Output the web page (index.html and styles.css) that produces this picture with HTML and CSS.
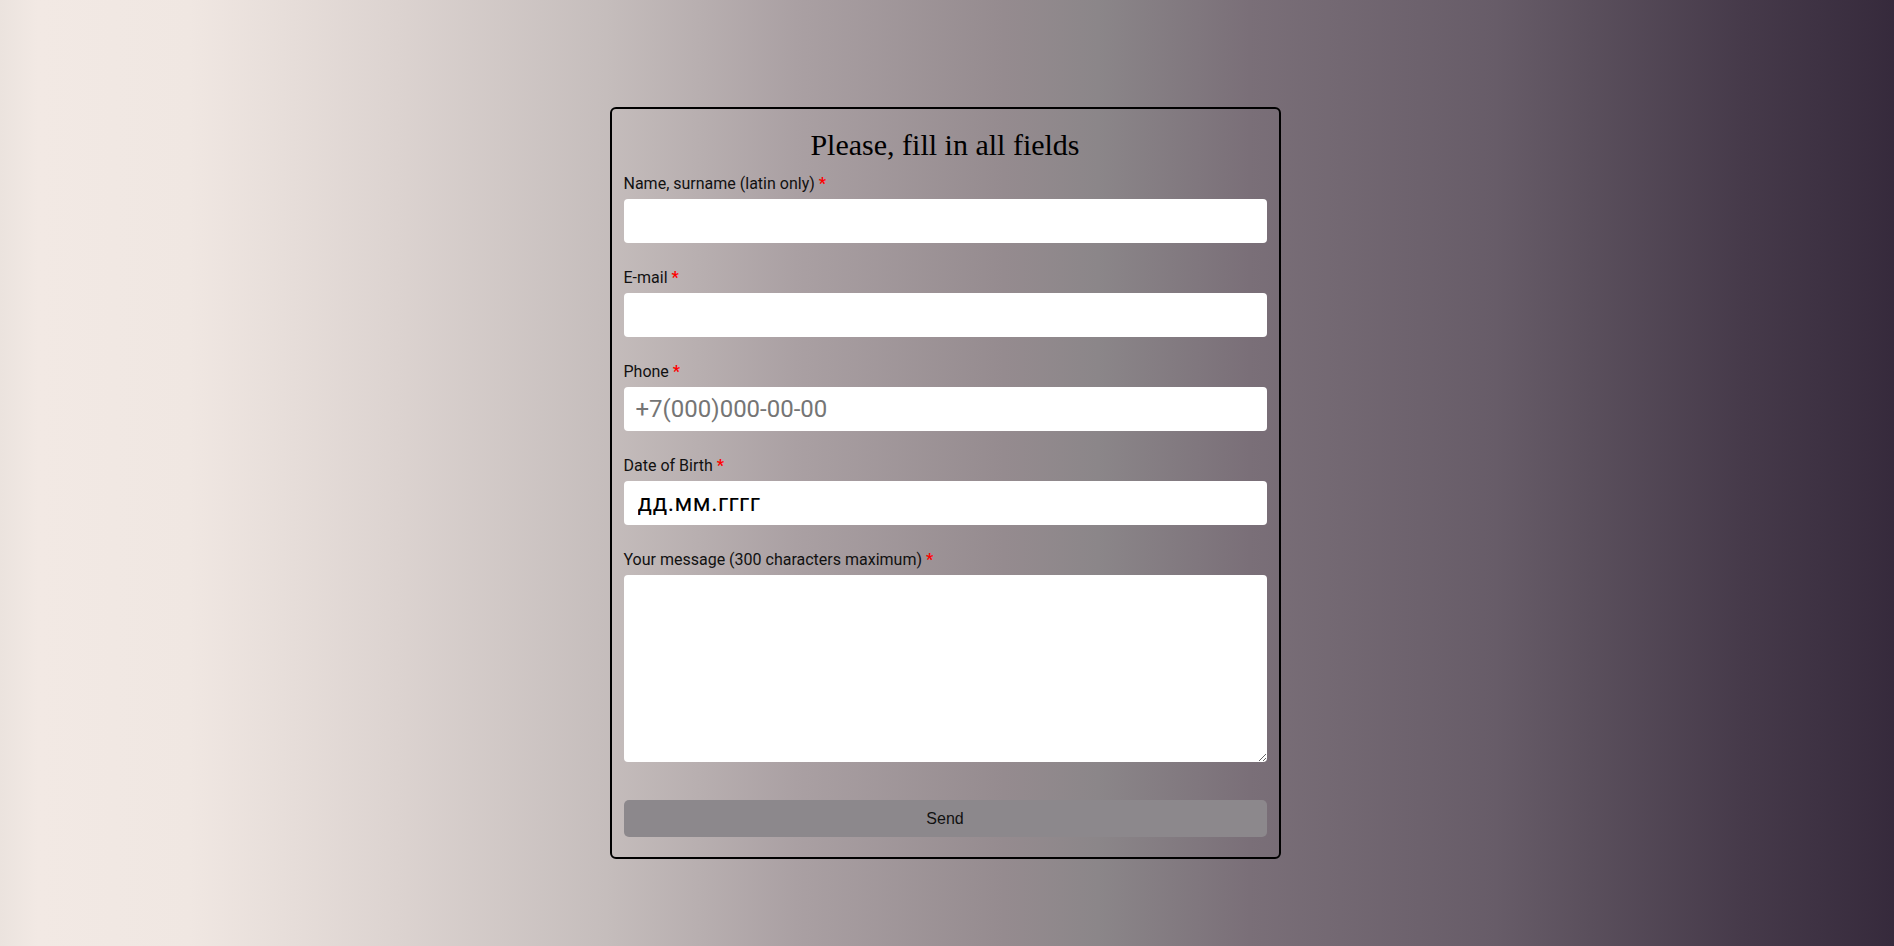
FILE: index.html
```html
<!doctype html>
<html lang="en">
  <head>
    <meta charset="UTF-8" />
    <meta name="viewport" content="width=device-width, initial-scale=1.0" />
    <title>Feedback form</title>
    <link rel="stylesheet" href="styles.css">
  </head>
  <body>
    <form class="feedback" action="#" onsubmit="return false;">
      <h1 class="title">Please, fill in all fields</h1>

      <div class="field">
        <label for="name">Name, surname (latin only) <span class="req">*</span></label>
        <input type="text" id="name" name="name" />
      </div>

      <div class="field">
        <label for="email">E-mail <span class="req">*</span></label>
        <input type="email" id="email" name="email" />
      </div>

      <div class="field">
        <label for="phone">Phone <span class="req">*</span></label>
        <input type="tel" id="phone" name="phone" placeholder="+7(000)000-00-00" />
      </div>

      <div class="field">
        <label for="birth">Date of Birth <span class="req">*</span></label>
        <input type="text" id="birth" name="birth" class="date" placeholder="дд.мм.гггг" />
      </div>

      <div class="field field-message">
        <label for="message">Your message (300 characters maximum) <span class="req">*</span></label>
        <textarea id="message" name="message" maxlength="300"></textarea>
      </div>

      <button type="submit" class="send">Send</button>
    </form>
  </body>
</html>
```

FILE: styles.css
```css
html,
body {
  margin: 0;
  min-height: 100vh;
}
body {
  box-sizing: border-box;
  padding: 107px 4px 0 0;
  font-family: Roboto, Arial, sans-serif;
  background: linear-gradient(
    to right,
    #ebe3de 0%,
    #f2e9e4 2%,
    #f0e7e2 10%,
    #dcd3d0 21%,
    #c5bdbc 32%,
    #aaa0a3 42%,
    #958b8f 53%,
    #8b8689 58%,
    #7a6f78 66%,
    #675c68 79%,
    #5a4f5c 84%,
    #463a4a 92%,
    #362a3c 100%
  );
}
.feedback {
  width: 643px;
  margin: 0 auto;
  padding: 12px 12px 20px;
  border: 2px solid #000;
  border-radius: 6px;
  display: flex;
  flex-direction: column;
}
.title {
  font-family: "Liberation Serif", "Times New Roman", serif;
  font-size: 30px;
  font-weight: normal;
  line-height: 34px;
  text-align: center;
  color: #000;
  margin: 7px 0 12px;
}
.field {
  display: flex;
  flex-direction: column;
  margin-bottom: 25px;
}
.field label {
  font-size: 16px;
  line-height: 19px;
  color: #111;
  margin-bottom: 6px;
}
.req {
  color: #f00;
  font-weight: bold;
}
.field input,
.field textarea {
  box-sizing: border-box;
  width: 100%;
  border: none;
  border-radius: 4px;
  background: #fff;
  font-family: Roboto, Arial, sans-serif;
  font-size: 24px;
  color: #000;
  outline: none;
}
.field input {
  height: 44px;
  padding: 0 12px;
}
.field input.date {
  padding-left: 14px;
  letter-spacing: 0.5px;
}
.field input.date::placeholder {
  color: #000;
}
.field textarea {
  height: 187px;
  padding: 8px 12px;
  resize: both;
}
.field-message {
  margin-bottom: 38px;
}
.send {
  height: 37px;
  border: none;
  border-radius: 5px;
  background-color: #8c888c;
  font-family: "Liberation Sans", Arial, sans-serif;
  font-size: 16px;
  color: #111;
  cursor: pointer;
}
```
